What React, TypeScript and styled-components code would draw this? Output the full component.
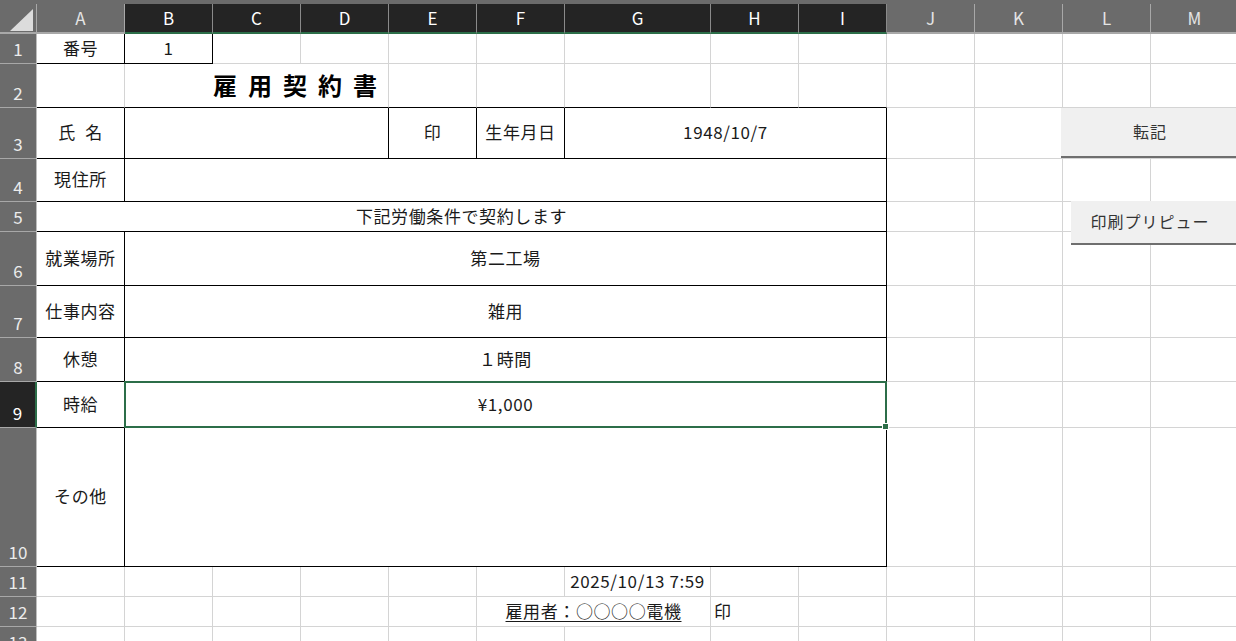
import React from 'react';
import styled, { createGlobalStyle } from 'styled-components';

const GRID = '#d4d4d4';
const INK = '#000';
const GREEN = '#2c6e49';
const HEAD = '#6b6b6b';
const HEAD_DARK = '#242424';

const GlobalStyle = createGlobalStyle`
  html, body {
    margin: 0;
    padding: 0;
    background: #fff;
    overflow: hidden;
  }
  body {
    font-family: "Noto Sans CJK JP", "Noto Sans", sans-serif;
  }
`;

const Screen = styled.div`
  position: relative;
  width: 1236px;
  height: 641px;
  overflow: hidden;
  background: #fff;
`;

const TopBand = styled.div`
  height: 4px;
  background: ${HEAD};
`;

const Sheet = styled.div`
  display: grid;
  grid-template-columns: 37px repeat(6, 88px) 146px repeat(6, 88px);
  grid-template-rows: 30px 30px 44px 51px 43px 30px 54px 52px 44px 46px 139px 30px 30px 30px;
`;

const Corner = styled.div`
  box-sizing: border-box;
  background: ${HEAD};
  border-right: 1px solid #a8a8a8;
  border-bottom: 2px solid #a8a8a8;
  display: flex;
  align-items: flex-end;
  justify-content: flex-end;
  padding: 0 3px 1px 0;
`;

const ColHead = styled.div<{ $selected?: boolean }>`
  box-sizing: border-box;
  background: ${p => (p.$selected ? HEAD_DARK : HEAD)};
  color: ${p => (p.$selected ? '#fff' : '#e4e4e4')};
  border-right: 1px solid ${p => (p.$selected ? '#8a8a8a' : '#a8a8a8')};
  border-bottom: 2px solid ${p => (p.$selected ? GREEN : '#a8a8a8')};
  display: flex;
  align-items: center;
  justify-content: center;
  font-size: 17px;
  line-height: 20px;
`;

const RowHead = styled.div<{ $selected?: boolean }>`
  box-sizing: border-box;
  background: ${p => (p.$selected ? HEAD_DARK : HEAD)};
  color: ${p => (p.$selected ? '#fff' : '#ececec')};
  border-right: ${p => (p.$selected ? `2px solid ${GREEN}` : '1px solid #bdbdbd')};
  border-bottom: 1px solid #a8a8a8;
  display: flex;
  align-items: flex-end;
  justify-content: center;
  padding-bottom: 4px;
  font-size: 17px;
  line-height: 20px;
`;

type Align = 'left' | 'center' | 'right';

const Cell = styled.div<{ $span?: number; $align?: Align; $r?: boolean; $b?: boolean }>`
  grid-column: span ${p => p.$span ?? 1};
  box-sizing: border-box;
  border-right: 1px solid ${p => (p.$r ? INK : GRID)};
  border-bottom: 1px solid ${p => (p.$b ? INK : GRID)};
  display: flex;
  align-items: center;
  justify-content: ${p => (p.$align === 'left' ? 'flex-start' : p.$align === 'right' ? 'flex-end' : 'center')};
  padding: 0 3px 3px;
  font-size: 17px;
  color: #1a1a1a;
  white-space: nowrap;
  letter-spacing: 0.6px;
`;

const ActiveCell = styled(Cell)`
  position: relative;
`;

const Selection = styled.div`
  position: absolute;
  top: -1px;
  left: -1px;
  right: -1px;
  bottom: -1px;
  border: 2px solid ${GREEN};
  pointer-events: none;
`;

const FillHandle = styled.div`
  position: absolute;
  right: -4px;
  bottom: -4px;
  width: 5px;
  height: 5px;
  background: ${GREEN};
  border: 1px solid #fff;
`;

const Title = styled.span`
  font-size: 24px;
  font-weight: 700;
  letter-spacing: 11px;
  color: #000;
  margin-right: -3px;
`;

const Spaced = styled.span`
  word-spacing: 5px;
`;

const Signed = styled.span`
  text-decoration: underline;
  text-underline-offset: 3px;
`;

const SheetButton = styled.button<{ $top: number; $left: number; $width: number; $height: number; $shift?: number }>`
  position: absolute;
  top: ${p => p.$top}px;
  left: ${p => p.$left}px;
  width: ${p => p.$width}px;
  height: ${p => p.$height}px;
  box-sizing: border-box;
  background: #f0f0f0;
  border: none;
  border-bottom: 2px solid #6f6f6f;
  padding: 0 ${p => p.$shift ?? 0}px 2px 0;
  font-family: "Noto Sans CJK JP", "Noto Sans", sans-serif;
  font-size: 16px;
  letter-spacing: 1px;
  color: #333;
`;

const COLS = ['A', 'B', 'C', 'D', 'E', 'F', 'G', 'H', 'I', 'J', 'K', 'L', 'M'];
const SELECTED_COLS = 'BCDEFGHI';

const blanks = (n: number, key: string) =>
  Array.from({ length: n }, (_, i) => <Cell key={`${key}-${i}`} />);

const LabelRow = ({ n, label, value, selected }: { n: number; label: string; value?: string; selected?: boolean }) => {
  const Value = selected ? ActiveCell : Cell;
  return (
    <>
      <RowHead $selected={selected}>{n}</RowHead>
      <Cell $r $b>{label}</Cell>
      <Value $span={8} $r $b>
        {value}
        {selected && (
          <Selection>
            <FillHandle />
          </Selection>
        )}
      </Value>
      {blanks(4, `r${n}`)}
    </>
  );
};

export default function App() {
  return (
    <Screen>
      <GlobalStyle />
      <TopBand />
      <Sheet>
        <Corner>
          <svg width="23" height="22" viewBox="0 0 23 22">
            <polygon points="23,0 23,22 0,22" fill="#dcdcdc" />
          </svg>
        </Corner>
        {COLS.map(c => (
          <ColHead key={c} $selected={SELECTED_COLS.includes(c)}>
            {c}
          </ColHead>
        ))}

        <RowHead>1</RowHead>
        <Cell $r $b>番号</Cell>
        <Cell $r $b>1</Cell>
        {blanks(11, 'r1')}

        <RowHead>2</RowHead>
        <Cell $b />
        <Cell $span={3} $b $align="right">
          <Title>雇用契約書</Title>
        </Cell>
        <Cell $b />
        <Cell $b />
        <Cell $b />
        <Cell $b />
        <Cell $b />
        {blanks(4, 'r2')}

        <RowHead>3</RowHead>
        <Cell $r $b>
          <Spaced>氏 名</Spaced>
        </Cell>
        <Cell $span={3} $r $b />
        <Cell $r $b>印</Cell>
        <Cell $r $b>生年月日</Cell>
        <Cell $span={3} $r $b>1948/10/7</Cell>
        {blanks(4, 'r3')}

        <LabelRow n={4} label="現住所" />

        <RowHead>5</RowHead>
        <Cell $span={9} $r $b>下記労働条件で契約します</Cell>
        {blanks(4, 'r5')}

        <LabelRow n={6} label="就業場所" value="第二工場" />
        <LabelRow n={7} label="仕事内容" value="雑用" />
        <LabelRow n={8} label="休憩" value="１時間" />
        <LabelRow n={9} label="時給" value="¥1,000" selected />
        <LabelRow n={10} label="その他" />

        <RowHead>11</RowHead>
        {blanks(6, 'r11a')}
        <Cell>2025/10/13 7:59</Cell>
        {blanks(6, 'r11b')}

        <RowHead>12</RowHead>
        {blanks(5, 'r12a')}
        <Cell $span={2}>
          <Signed>雇用者：○○○○電機</Signed>
        </Cell>
        <Cell $align="left">印</Cell>
        {blanks(5, 'r12b')}

        <RowHead>13</RowHead>
        {blanks(13, 'r13')}
      </Sheet>

      <SheetButton $top={108} $left={1061} $width={178} $height={50}>
        転記
      </SheetButton>
      <SheetButton $top={201} $left={1071} $width={172} $height={44} $shift={14}>
        印刷プリピュー
      </SheetButton>
    </Screen>
  );
}
